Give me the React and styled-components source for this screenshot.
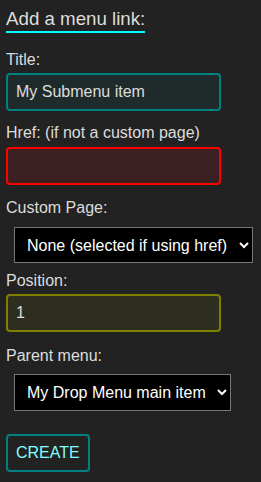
import React from "react";
import styled, { createGlobalStyle } from "styled-components";

const Global = createGlobalStyle`
  html, body { margin: 0; padding: 0; background: #222222; }
  body { font-family: "Liberation Sans", Arial, sans-serif; color: #dddddd; }
`;

const Form = styled.form`
  display: flex;
  flex-direction: column;
  align-items: flex-start;
  padding: 8px 6px 0 6px;
  min-height: 482px;
  box-sizing: border-box;
`;

const Heading = styled.h3`
  margin: 0 0 18px 0;
  font-size: 18.72px;
  font-weight: normal;
  line-height: 21.5px;
  color: #dddddd;
  padding-bottom: 1.5px;
  border-bottom: 2px solid #00ffff;
`;

const Label = styled.label`
  display: block;
  font-size: 16px;
  line-height: 18px;
  color: #dddddd;
  margin-bottom: ${(p) => p.$gap}px;
`;

const tones = {
  teal: { border: "#008080", bg: "#1f2b2b" },
  red: { border: "#ff0000", bg: "#3c1f20" },
  olive: { border: "#808000", bg: "#2e2e1f" },
};

const Input = styled.input`
  box-sizing: border-box;
  width: 215px;
  height: 38px;
  margin: 0 0 ${(p) => p.$after}px 0;
  padding: 0 8px;
  border: 2px solid ${(p) => tones[p.$tone].border};
  border-radius: 4px;
  background: ${(p) => tones[p.$tone].bg};
  color: #dddddd;
  font-family: "Liberation Sans", Arial, sans-serif;
  font-size: 16px;
  outline: none;
`;

const Select = styled.select`
  box-sizing: border-box;
  height: ${(p) => p.$h}px;
  margin: ${(p) => p.$before}px 0 ${(p) => p.$after}px 8px;
  padding: 0 8px 0 8px;
  border: 1px solid #767676;
  border-radius: 0;
  background: #000000;
  color: #ffffff;
  font-family: "Liberation Sans", Arial, sans-serif;
  font-size: 16px;
`;

const Button = styled.button`
  box-sizing: border-box;
  height: 38px;
  padding: 0 8px;
  border: 2px solid #008080;
  border-radius: 4px;
  background: transparent;
  color: #80ffff;
  font-family: "Liberation Sans", Arial, sans-serif;
  font-size: 16px;
  cursor: pointer;
`;

export default function App() {
  return (
    <>
      <Global />
      <Form onSubmit={(e) => e.preventDefault()}>
        <Heading>Add a menu link:</Heading>
        <Label $gap={4}>Title:</Label>
        <Input $tone="teal" $after={13} defaultValue="My Submenu item" />
        <Label $gap={5}>Href: (if not a custom page)</Label>
        <Input $tone="red" $after={14} defaultValue="" />
        <Label $gap={4}>Custom Page:</Label>
        <Select $h={36} $before={6} $after={9} defaultValue="none">
          <option value="none">None (selected if using href)</option>
        </Select>
        <Label $gap={4}>Position:</Label>
        <Input $tone="olive" $after={15} defaultValue="1" />
        <Label $gap={4}>Parent menu:</Label>
        <Select $h={37} $before={5} $after={23} defaultValue="drop">
          <option value="drop">My Drop Menu main item</option>
        </Select>
        <Button type="submit">CREATE</Button>
      </Form>
    </>
  );
}
